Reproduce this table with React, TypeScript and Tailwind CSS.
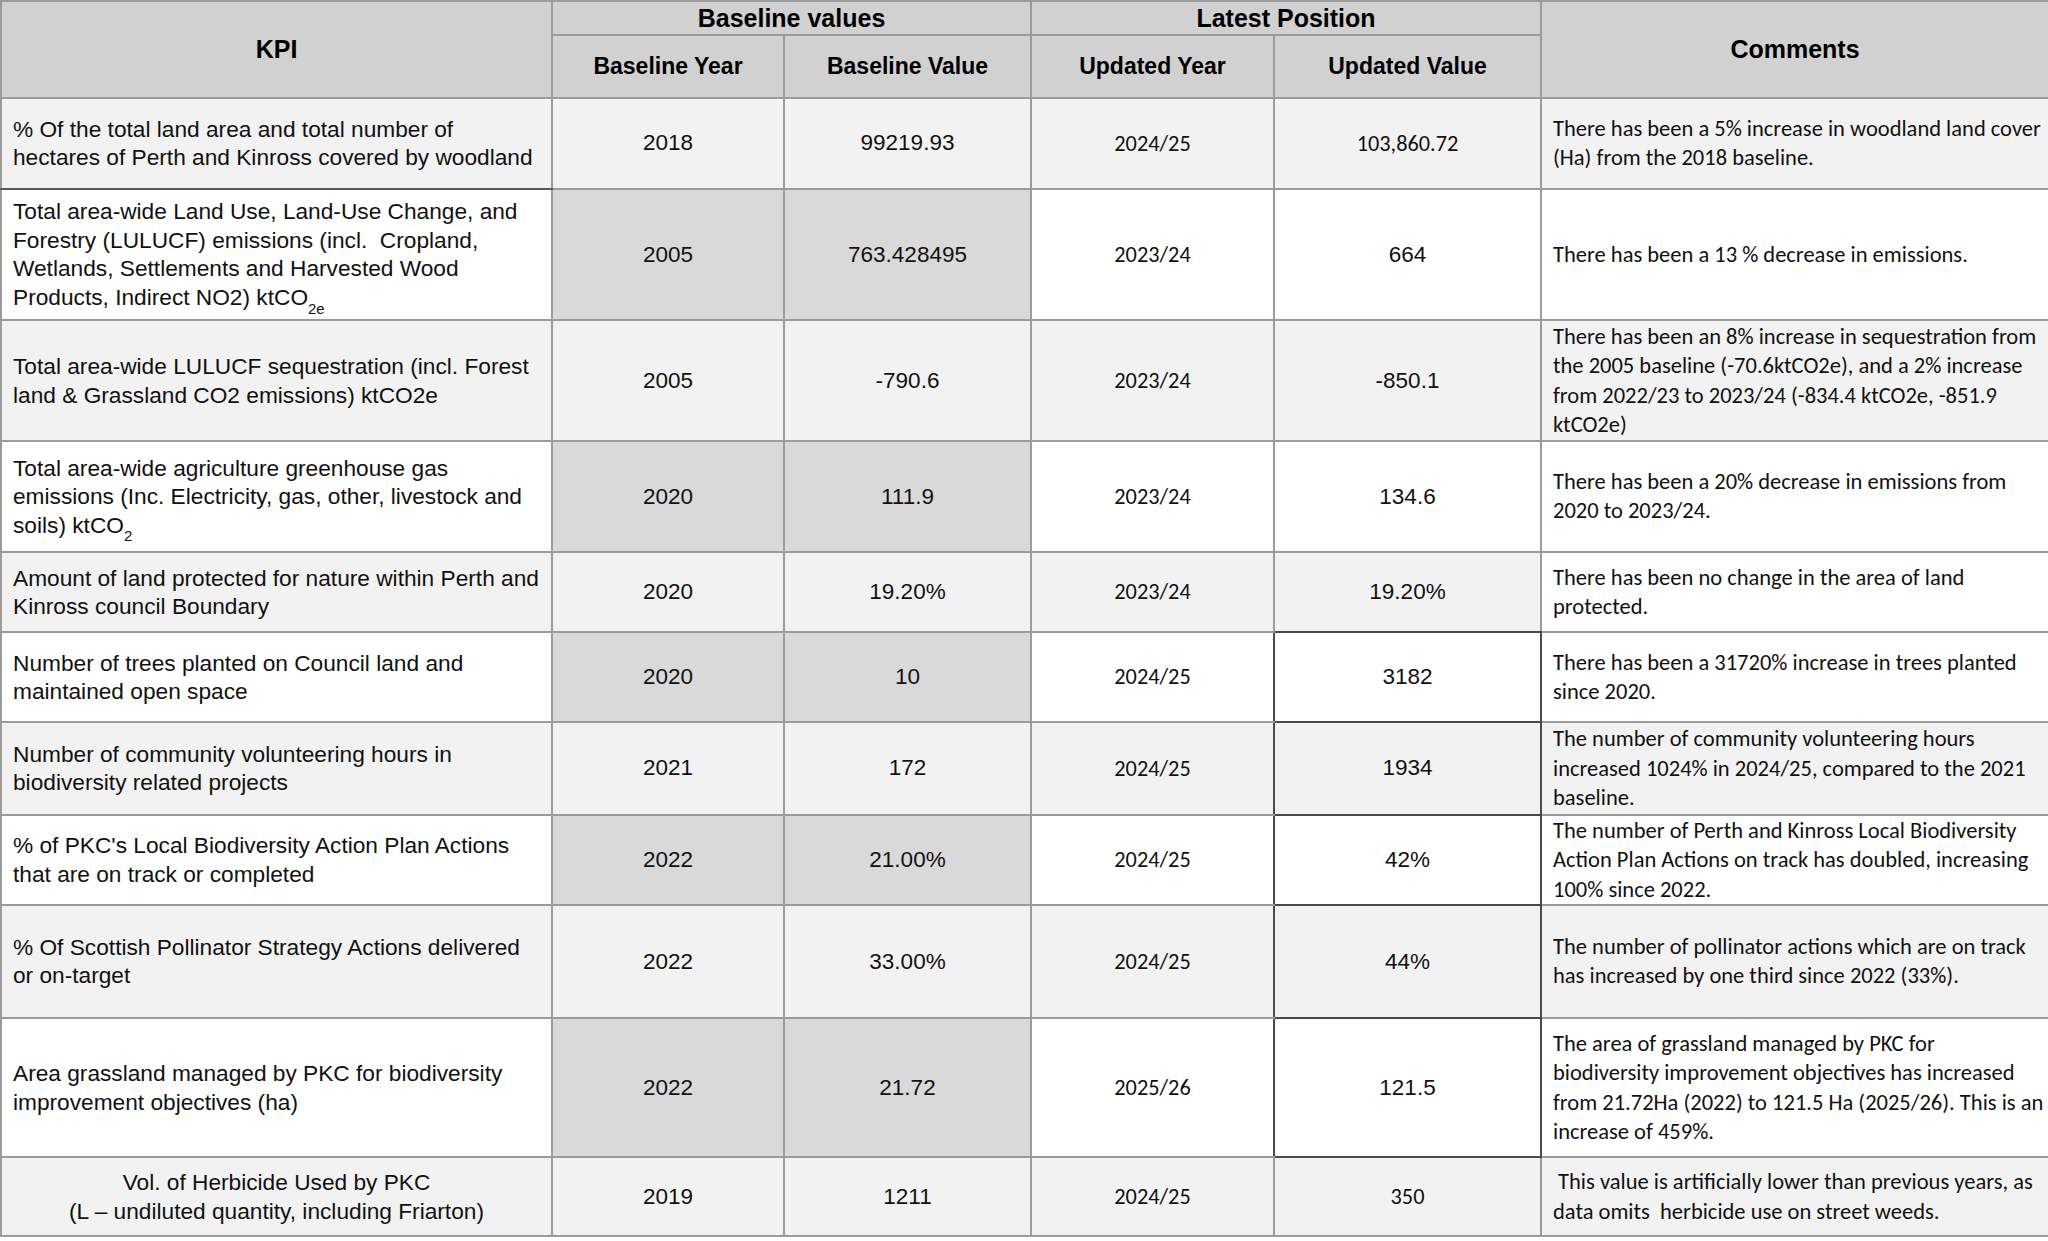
import type { ReactNode } from "react";

type Row = {
  kpi: ReactNode[];
  kpiCenter?: boolean;
  baseYear: string;
  baseValue: string;
  year: string;
  value: string;
  valueCalibri?: boolean;
  darkValue?: boolean;
  comment: string[];
  light: boolean;
  commentLight: boolean;
  h: string;
};

const rows: Row[] = [
  {
    kpi: ["% Of the total land area and total number of", "hectares of Perth and Kinross covered by woodland"],
    baseYear: "2018",
    baseValue: "99219.93",
    year: "2024/25",
    value: "103,860.72",
    valueCalibri: true,
    comment: ["There has been a 5% increase in woodland land cover", "(Ha) from the 2018 baseline."],
    light: true,
    commentLight: true,
    h: "h-[90.6px]",
  },
  {
    kpi: [
      "Total area-wide Land Use, Land-Use Change, and",
      "Forestry (LULUCF) emissions (incl.  Cropland,",
      "Wetlands, Settlements and Harvested Wood",
      <>
        Products, Indirect NO2) ktCO<sub className="text-[15px] align-[-5px]">2e</sub>
      </>,
    ],
    baseYear: "2005",
    baseValue: "763.428495",
    year: "2023/24",
    value: "664",
    comment: ["There has been a 13 % decrease in emissions."],
    light: false,
    commentLight: false,
    h: "h-[131.6px]",
  },
  {
    kpi: ["Total area-wide LULUCF sequestration (incl. Forest", "land & Grassland CO2 emissions) ktCO2e"],
    baseYear: "2005",
    baseValue: "-790.6",
    year: "2023/24",
    value: "-850.1",
    comment: [
      "There has been an 8% increase in sequestration from",
      "the 2005 baseline (-70.6ktCO2e), and a 2% increase",
      "from 2022/23 to 2023/24 (-834.4 ktCO2e, -851.9",
      "ktCO2e)",
    ],
    light: true,
    commentLight: true,
    h: "h-[121px]",
  },
  {
    kpi: [
      "Total area-wide agriculture greenhouse gas",
      "emissions (Inc. Electricity, gas, other, livestock and",
      <>
        soils) ktCO<sub className="text-[15px] align-[-5px]">2</sub>
      </>,
    ],
    baseYear: "2020",
    baseValue: "111.9",
    year: "2023/24",
    value: "134.6",
    comment: ["There has been a 20% decrease in emissions from", "2020 to 2023/24."],
    light: false,
    commentLight: false,
    h: "h-[110.6px]",
  },
  {
    kpi: ["Amount of land protected for nature within Perth and", "Kinross council Boundary"],
    baseYear: "2020",
    baseValue: "19.20%",
    year: "2023/24",
    value: "19.20%",
    comment: ["There has been no change in the area of land", "protected."],
    light: true,
    commentLight: false,
    h: "h-[80.6px]",
  },
  {
    kpi: ["Number of trees planted on Council land and", "maintained open space"],
    baseYear: "2020",
    baseValue: "10",
    year: "2024/25",
    value: "3182",
    darkValue: true,
    comment: ["There has been a 31720% increase in trees planted", "since 2020."],
    light: false,
    commentLight: false,
    h: "h-[89.6px]",
  },
  {
    kpi: ["Number of community volunteering hours in", "biodiversity related projects"],
    baseYear: "2021",
    baseValue: "172",
    year: "2024/25",
    value: "1934",
    darkValue: true,
    comment: [
      "The number of community volunteering hours",
      "increased 1024% in 2024/25, compared to the 2021",
      "baseline.",
    ],
    light: true,
    commentLight: true,
    h: "h-[92.6px]",
  },
  {
    kpi: ["% of PKC's Local Biodiversity Action Plan Actions", "that are on track or completed"],
    baseYear: "2022",
    baseValue: "21.00%",
    year: "2024/25",
    value: "42%",
    darkValue: true,
    comment: [
      "The number of Perth and Kinross Local Biodiversity",
      "Action Plan Actions on track has doubled, increasing",
      "100% since 2022.",
    ],
    light: false,
    commentLight: false,
    h: "h-[90.6px]",
  },
  {
    kpi: ["% Of Scottish Pollinator Strategy Actions delivered", "or on-target"],
    baseYear: "2022",
    baseValue: "33.00%",
    year: "2024/25",
    value: "44%",
    darkValue: true,
    comment: ["The number of pollinator actions which are on track", "has increased by one third since 2022 (33%)."],
    light: true,
    commentLight: true,
    h: "h-[112.6px]",
  },
  {
    kpi: ["Area grassland managed by PKC for biodiversity", "improvement objectives (ha)"],
    baseYear: "2022",
    baseValue: "21.72",
    year: "2025/26",
    value: "121.5",
    darkValue: true,
    comment: [
      "The area of grassland managed by PKC for",
      "biodiversity improvement objectives has increased",
      "from 21.72Ha (2022) to 121.5 Ha (2025/26). This is an",
      "increase of 459%.",
    ],
    light: false,
    commentLight: false,
    h: "h-[139.6px]",
  },
  {
    kpi: ["Vol. of Herbicide Used by PKC", "(L – undiluted quantity, including Friarton)"],
    kpiCenter: true,
    baseYear: "2019",
    baseValue: "1211",
    year: "2024/25",
    value: "350",
    valueCalibri: true,
    comment: [" This value is artificially lower than previous years, as", "data omits  herbicide use on street weeds."],
    light: true,
    commentLight: true,
    h: "h-[78.6px]",
  },
];

const arial = "font-['Liberation_Sans',Arial,sans-serif]";
const calibri = "font-['Carlito',Calibri,Lato,sans-serif]";
const cell = "border-2 border-[#9b9b9b] p-0 align-middle";
const head = `${cell} bg-[#d1d1d1] font-bold text-center text-black ${arial}`;

export default function App() {
  return (
    <div className="w-[2048px] bg-white">
      <table className="w-[2048px] table-fixed border-collapse text-[#111]">
        <colgroup>
          <col className="w-[551px]" />
          <col className="w-[232px]" />
          <col className="w-[247px]" />
          <col className="w-[243px]" />
          <col className="w-[267px]" />
          <col className="w-[508px]" />
        </colgroup>
        <thead>
          <tr className="h-[34px]">
            <th rowSpan={2} className={`${head} text-[25px]`}>
              KPI
            </th>
            <th colSpan={2} className={`${head} text-[25px] leading-[30px]`}>
              Baseline values
            </th>
            <th colSpan={2} className={`${head} text-[25px] leading-[30px]`}>
              Latest Position
            </th>
            <th rowSpan={2} className={`${head} text-[25px]`}>
              Comments
            </th>
          </tr>
          <tr className="h-[63px]">
            <th className={`${head} text-[23px]`}>Baseline Year</th>
            <th className={`${head} text-[23px]`}>Baseline Value</th>
            <th className={`${head} text-[23px]`}>Updated Year</th>
            <th className={`${head} text-[23px]`}>Updated Value</th>
          </tr>
        </thead>
        <tbody>
          {rows.map((r, i) => {
            const base = r.light ? "bg-[#f2f2f2]" : "bg-[#d9d9d9]";
            const plain = r.light ? "bg-[#f2f2f2]" : "bg-white";
            return (
              <tr key={i} className={r.h}>
                <td
                  className={`${cell} ${plain} ${arial} text-[22.7px] leading-[28.5px] ${
                    r.kpiCenter ? "text-center" : "pl-[11px] text-left"
                  } ${i === 0 ? "border-b-[#5c5c5c]" : ""}`}
                >
                  {r.kpi.map((line, j) => (
                    <div key={j} className="whitespace-pre">
                      {line}
                    </div>
                  ))}
                </td>
                <td className={`${cell} ${base} ${arial} text-center text-[22.5px]`}>{r.baseYear}</td>
                <td className={`${cell} ${base} ${arial} text-center text-[22.5px]`}>{r.baseValue}</td>
                <td
                  className={`${cell} ${plain} ${calibri} text-center text-[22.3px] ${
                    r.darkValue ? "border-r-[#4a4a4a]" : ""
                  }`}
                >
                  {r.year}
                </td>
                <td
                  className={`${cell} ${plain} text-center ${
                    r.valueCalibri ? `${calibri} text-[22.3px]` : `${arial} text-[22.5px]`
                  } ${r.darkValue ? "border-r-[#4a4a4a] border-b-[#4a4a4a]" : ""} ${
                    i === 4 ? "border-b-[#4a4a4a]" : ""
                  }`}
                >
                  {r.value}
                </td>
                <td
                  className={`${cell} ${r.commentLight ? "bg-[#f2f2f2]" : "bg-white"} ${calibri} pl-[11px] text-[22.5px] leading-[29.5px]`}
                >
                  {r.comment.map((line, j) => (
                    <div key={j} className="whitespace-pre">
                      {line}
                    </div>
                  ))}
                </td>
              </tr>
            );
          })}
        </tbody>
      </table>
    </div>
  );
}
